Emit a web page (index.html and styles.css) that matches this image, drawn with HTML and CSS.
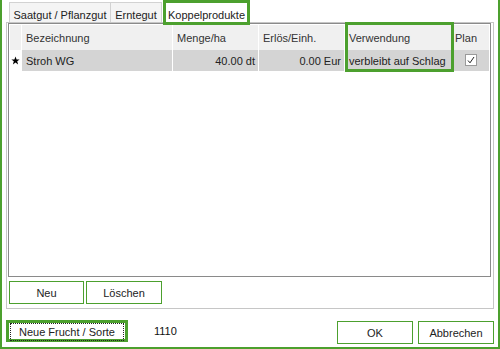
FILE: index.html
```html
<!DOCTYPE html>
<html lang="de">
<head>
    <meta charset="UTF-8">
    <title>Koppelprodukte</title>
    <link rel="stylesheet" href="styles.css">
</head>
<body>
<div class="window">

    <!-- Tab strip -->
    <div class="tabs">
        <div class="tab tab-first">Saatgut / Pflanzgut</div>
        <div class="tab tab-second">Erntegut</div>
        <div class="tab tab-active">Koppelprodukte</div>
    </div>

    <div class="panel">
        <div class="grid">
            <div class="grid-row grid-head">
                <div class="cell"></div>
                <div class="cell">Bezeichnung</div>
                <div class="cell">Menge/ha</div>
                <div class="cell">Erlös/Einh.</div>
                <div class="cell">Verwendung</div>
                <div class="cell cell-plan">Plan</div>
            </div>
            <div class="grid-row grid-data">
                <div class="cell cell-marker">
                    <svg width="9" height="9" viewBox="0 0 10 10"><polygon points="5,0.5 6.2,3.8 9.6,3.8 6.9,5.9 7.9,9.4 5,7.3 2.1,9.4 3.1,5.9 0.4,3.8 3.8,3.8" fill="#000"/></svg>
                </div>
                <div class="cell">Stroh WG</div>
                <div class="cell num">40.00 dt</div>
                <div class="cell num">0.00 Eur</div>
                <div class="cell">verbleibt auf Schlag</div>
                <div class="cell cell-check">
                    <span class="checkbox">
                        <svg width="10" height="10" viewBox="0 0 10 10"><polyline points="2,5.5 4,7.8 8,2" fill="none" stroke="#222" stroke-width="1"/></svg>
                    </span>
                </div>
            </div>
            <!-- highlight over the Verwendung column -->
            <div class="col-mark"></div>
        </div>

        <div class="panel-buttons">
            <button class="btn btn-neu">Neu</button>
            <button class="btn btn-del">Löschen</button>
        </div>
    </div>

    <div class="footer">
        <button class="btn btn-focus"><span class="focus-ring">Neue Frucht / Sorte</span></button>
        <span class="code">1110</span>
        <div class="spacer"></div>
        <button class="btn btn-dialog">OK</button>
        <button class="btn btn-dialog">Abbrechen</button>
    </div>

</div>
</body>
</html>
```

FILE: styles.css
```css
/* General */
html, body {
    margin: 0;
    padding: 0;
    background-color: #fff;
}

body {
    font-family: "Liberation Sans", Arial, sans-serif;
    font-size: 11px;
    color: #222;
}

.window {
    width: 500px;
    height: 349px;
    box-sizing: border-box;
    border-left: 2px solid #4ca02e;
    border-right: 2px solid #4ca02e;
    border-bottom: 2px solid #4ca02e;
    padding: 0 4px;
    overflow: hidden;
}

/* Tabs */
.tabs {
    display: flex;
    align-items: flex-end;
    height: 22px;
    padding-left: 3px;
}

.tab {
    box-sizing: border-box;
    height: 20px;
    padding-top: 5px;
    line-height: 14px;
    text-align: center;
    white-space: nowrap;
    background-color: #f4f4f4;
    border: 1px solid #d2d2d2;
    border-bottom: none;
}

.tab-first {
    width: 102px;
}

.tab-second {
    width: 52px;
    margin-left: -1px;
}

.tab-active {
    position: relative;
    z-index: 2;
    width: 87px;
    height: 25px;
    margin-left: 1px;
    margin-bottom: -3px;
    background-color: #fff;
    border: 3px solid #4ca02e;
    padding-top: 5px;
}

/* Tab page */
.panel {
    border: 1px solid #c6c6c6;
    padding: 0 2px 4px 1px;
}

.grid {
    position: relative;
    height: 254px;
    box-sizing: border-box;
    border: 1px solid #8a8a8a;
    padding: 1px;
    background-color: #fff;
}

.grid-row {
    display: grid;
    grid-template-columns: 12px 151px 86px 86px 108px 36px;
}

.grid-head {
    height: 25px;
    background-color: #f0f0f0;
    color: #333;
}

.grid-data {
    height: 21px;
    background-color: #d4d4d4;
}

.cell {
    display: flex;
    align-items: center;
    box-sizing: border-box;
    padding-left: 4px;
    border-right: 1px solid #fff;
    white-space: nowrap;
    overflow: hidden;
}

.cell:last-child {
    border-right: none;
}

.cell.num {
    justify-content: flex-end;
    padding-left: 0;
    padding-right: 3px;
}

.cell-plan {
    padding-left: 2px;
}

.cell-marker {
    background-color: #fff;
    padding-left: 1px;
}

.cell-check {
    justify-content: center;
    padding-left: 0;
}

.checkbox {
    display: flex;
    align-items: center;
    justify-content: center;
    width: 12px;
    height: 12px;
    box-sizing: border-box;
    border: 1px solid #9a9a9a;
    background-color: #fff;
    margin-top: -2px;
}

.col-mark {
    position: absolute;
    left: 336px;
    top: -2px;
    width: 109px;
    height: 50px;
    box-sizing: border-box;
    border: 3px solid #4ca02e;
}

/* Buttons */
.btn {
    box-sizing: border-box;
    font-family: "Liberation Sans", Arial, sans-serif;
    font-size: 11px;
    color: #222;
    background-color: #fff;
    border: 1px solid #4ca02e;
    padding: 0;
    margin: 0;
}

.panel-buttons {
    display: flex;
    gap: 2px;
    margin: 4px 0 0 1px;
}

.btn-neu {
    width: 75px;
    height: 23px;
}

.btn-del {
    width: 76px;
    height: 23px;
}

.footer {
    display: flex;
    align-items: flex-start;
    margin-top: 11px;
}

.btn-focus {
    width: 122px;
    height: 22px;
    border: 3px solid #4ca02e;
    padding: 0 1px;
}

.focus-ring {
    display: flex;
    align-items: center;
    justify-content: center;
    height: 16px;
    border: 1px dotted #222;
}

.code {
    margin-left: 26px;
    line-height: 22px;
    color: #111;
}

.spacer {
    flex: 1;
}

.btn-dialog {
    width: 76px;
    height: 23px;
    margin-top: 1px;
    margin-left: 5px;
}
```
